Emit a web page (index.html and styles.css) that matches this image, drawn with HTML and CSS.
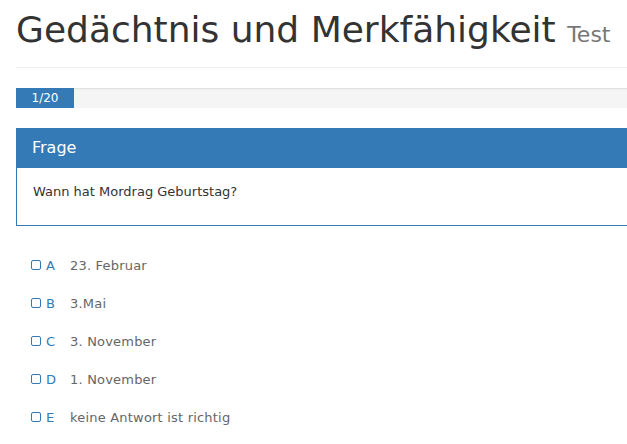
FILE: index.html
```html
<!DOCTYPE html>
<html lang="de">
<head>
<meta charset="utf-8">
<title>Test</title>
<link rel="stylesheet" href="styles.css">
</head>
<body>
<div class="container">
  <h1 class="title">Gedächtnis und Merkfähigkeit <small>Test</small></h1>
  <hr class="rule">
  <div class="progress"><div class="progress-bar" style="width: 58px">1/20</div></div>
  <div class="panel">
    <div class="panel-heading">Frage</div>
    <div class="panel-body">Wann hat Mordrag Geburtstag?</div>
  </div>
  <ul class="answers">
    <li class="answer"><span class="box"></span><span class="letter">A</span><span class="text">23. Februar</span></li>
    <li class="answer"><span class="box"></span><span class="letter">B</span><span class="text">3.Mai</span></li>
    <li class="answer"><span class="box"></span><span class="letter">C</span><span class="text">3. November</span></li>
    <li class="answer"><span class="box"></span><span class="letter">D</span><span class="text">1. November</span></li>
    <li class="answer"><span class="box"></span><span class="letter">E</span><span class="text">keine Antwort ist richtig</span></li>
  </ul>
</div>
</body>
</html>
```
FILE: styles.css
```css
html, body { overflow: hidden; }
body {
  margin: 0;
  font-family: "DejaVu Sans", Verdana, sans-serif;
  font-size: 13px;
  color: #333;
  background: #fff;
}
.container {
  width: 760px;
  padding-left: 16px;
}
.title {
  margin: 0;
  padding-top: 8px;
  font-family: "DejaVu Sans", Verdana, sans-serif;
  font-weight: normal;
  font-size: 36px;
  line-height: 44px;
  color: #333;
}
.title small {
  font-size: 22px;
  color: #777;
}
.rule {
  margin: 10px 0 0;
  border: 0;
  border-top: 1px solid #eee;
}
.progress {
  margin-top: 20px;
  height: 20px;
  background: #f5f5f5;
  box-shadow: inset 0 1px 2px rgba(0,0,0,.1);
  overflow: hidden;
}
.progress-bar {
  height: 20px;
  background: #337ab7;
  color: #fff;
  font-size: 12px;
  line-height: 20px;
  text-align: center;
}
.panel {
  margin-top: 20px;
  border: 1px solid #337ab7;
}
.panel-heading {
  background: #337ab7;
  color: #fff;
  font-size: 16px;
  line-height: 20px;
  padding: 9px 15px 10px;
}
.panel-body {
  padding: 15px 16px 24px;
  line-height: 18px;
}
.answers {
  list-style: none;
  margin: 30px 0 0;
  padding: 0 0 0 15px;
  display: flex;
  flex-direction: column;
  gap: 20px;
}
.answer {
  display: flex;
  align-items: center;
  height: 18px;
  color: #666;
}
.text {
  letter-spacing: 0.2px;
}
.box {
  width: 8px;
  height: 8px;
  border: 1px solid #337ab7;
  border-radius: 2px;
  margin-right: 5px;
}
.letter {
  color: #337ab7;
  width: 24px;
}
```
